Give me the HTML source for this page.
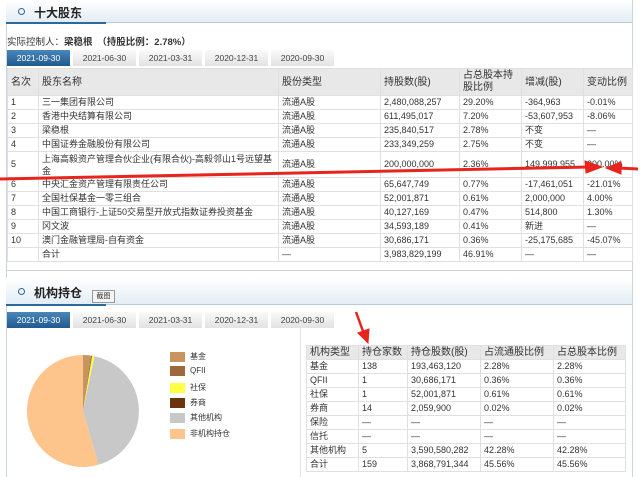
<!DOCTYPE html>
<html><head><meta charset="utf-8"><style>
*{margin:0;padding:0;box-sizing:border-box}
body{width:640px;height:477px;background:#fff;position:relative;overflow:hidden;font-family:"Liberation Sans","Noto Sans CJK SC",sans-serif;font-size:9px;color:#333}
.abs{position:absolute}
.hdr{left:6px;width:626px;height:23px;background:linear-gradient(#fff,#e3edf5);border-bottom:1px solid #b9cad8}
.hdr .ul{position:absolute;left:0;bottom:-2px;width:100px;height:2px;background:#2b6a9b}
.hdr .t{position:absolute;left:28px;top:4px;font-size:12px;font-weight:bold;color:#222}
.hdr .c{position:absolute;left:12px;top:8px;width:7px;height:7px;border:1.5px solid #2b6a9b;border-radius:50%}
.tabs{left:7px;height:16px;display:flex;gap:3px}
.tabs div{width:63px;height:16px;background:linear-gradient(#fafafa,#e2e2e2);text-align:center;line-height:16px;font-size:8.5px;color:#444}
.tabs div.on{background:linear-gradient(#4a86b8,#1e5a8e);color:#fff}
table{border-collapse:collapse;table-layout:fixed}
td{border:1px solid #e0e0e0;padding:0 3px;white-space:nowrap;overflow:hidden;height:14px;line-height:13px;font-size:9px}
tr.h td{background:#e8e8e8;color:#333;font-size:10px}
.lg{left:170px;font-size:8px;color:#333}
.lg span{display:inline-block;width:15px;height:10px;vertical-align:middle;margin-right:5px}
</style></head><body>
<div class="abs" style="left:6px;top:0;width:1px;height:477px;background:#c9d6e0"></div>
<div class="abs" style="left:632px;top:0;width:1px;height:477px;background:#c9d6e0"></div>
<div class="abs hdr" style="top:0"><div class="c"></div><div class="t">十大股东</div><div class="ul"></div></div>
<div class="abs" style="left:7px;top:34px;font-size:9.5px">实际控制人：<b>梁稳根</b>　<b>（持股比例：2.78%）</b></div>
<div class="abs tabs" style="top:50px"><div class="on">2021-09-30</div><div>2021-06-30</div><div>2021-03-31</div><div>2020-12-31</div><div>2020-09-30</div></div>
<table class="abs" style="left:7px;top:68px;width:625px">
<colgroup><col style="width:31px"><col style="width:240px"><col style="width:102px"><col style="width:79px"><col style="width:62px"><col style="width:62px"><col style="width:49px"></colgroup>
<tr class="h"><td style="height:27px">名次</td><td>股东名称</td><td>股份类型</td><td>持股数(股)</td><td style="white-space:normal;line-height:12px">占总股本持股比例</td><td>增减(股)</td><td>变动比例</td></tr>
<tr><td>1</td><td>三一集团有限公司</td><td>流通A股</td><td>2,480,088,257</td><td>29.20%</td><td>-364,963</td><td>-0.01%</td></tr>
<tr><td>2</td><td>香港中央结算有限公司</td><td>流通A股</td><td>611,495,017</td><td>7.20%</td><td>-53,607,953</td><td>-8.06%</td></tr>
<tr><td>3</td><td>梁稳根</td><td>流通A股</td><td>235,840,517</td><td>2.78%</td><td>不变</td><td>—</td></tr>
<tr><td>4</td><td>中国证券金融股份有限公司</td><td>流通A股</td><td>233,349,259</td><td>2.75%</td><td>不变</td><td>—</td></tr>
<tr><td style="height:26px">5</td><td style="white-space:normal;line-height:12px">上海高毅资产管理合伙企业(有限合伙)-高毅邻山1号远望基金</td><td>流通A股</td><td>200,000,000</td><td>2.36%</td><td>149,999,955</td><td>300.00%</td></tr>
<tr><td>6</td><td>中央汇金资产管理有限责任公司</td><td>流通A股</td><td>65,647,749</td><td>0.77%</td><td>-17,461,051</td><td>-21.01%</td></tr>
<tr><td>7</td><td>全国社保基金一零三组合</td><td>流通A股</td><td>52,001,871</td><td>0.61%</td><td>2,000,000</td><td>4.00%</td></tr>
<tr><td>8</td><td>中国工商银行-上证50交易型开放式指数证券投资基金</td><td>流通A股</td><td>40,127,169</td><td>0.47%</td><td>514,800</td><td>1.30%</td></tr>
<tr><td>9</td><td>冈文波</td><td>流通A股</td><td>34,593,189</td><td>0.41%</td><td>新进</td><td>—</td></tr>
<tr><td>10</td><td>澳门金融管理局-自有资金</td><td>流通A股</td><td>30,686,171</td><td>0.36%</td><td>-25,175,685</td><td>-45.07%</td></tr>
<tr><td></td><td>合计</td><td>—</td><td>3,983,829,199</td><td>46.91%</td><td>—</td><td>—</td></tr>
</table>
<div class="abs" style="left:6px;top:270px;width:627px;height:1px;background:#c9d6e0"></div>
<div class="abs hdr" style="top:278px;height:27px"><div class="c" style="top:10px"></div><div class="t" style="top:6px">机构持仓</div><div class="ul"></div></div>
<div class="abs" style="left:92px;top:290px;width:23px;height:13px;border:1px solid #999;background:#f4f4f4;font-size:7px;text-align:center;line-height:11px">截图</div>
<div class="abs tabs" style="top:312px"><div class="on">2021-09-30</div><div>2021-06-30</div><div>2021-03-31</div><div>2020-12-31</div><div>2020-09-30</div></div>
<div class="abs" style="left:300px;top:328px;width:332px;height:149px;border-left:1px solid #e4e4e4"></div>
<svg class="abs" style="left:0;top:0" width="640" height="477">
<path d="M83,411 L83,355 A56,56 0 0 1 91,355.6 Z" fill="#c8955f"/>
<path d="M83,411 L91,355.6 A56,56 0 0 1 92.2,355.8 Z" fill="#9c6a3a"/>
<path d="M83,411 L92.2,355.8 A56,56 0 0 1 94.4,356.2 Z" fill="#ffff44"/>
<path d="M83,411 L94.4,356.2 A56,56 0 0 1 98.5,464.8 Z" fill="#c8c8c8"/>
<path d="M83,411 L98.5,464.8 A56,56 0 1 1 83,355 Z" fill="#fdc58c"/>
<g stroke="#e8241c" fill="#e8241c">
<path d="M0,179 L590,167" stroke-width="3"/><path d="M585,161 L602,167 L586,173 Z"/>
<path d="M638,169 L618,168" stroke-width="3"/><path d="M621,162 L606,168 L621,174 Z"/>
<path d="M356,312 L364,334" stroke-width="2.5"/><path d="M358,333 L368,343 L369,329 Z"/>
</g></svg>
<div class="abs lg" style="top:351px"><span style="background:#c8955f"></span>基金</div>
<div class="abs lg" style="top:366px"><span style="background:#9c6a3a"></span>QFII</div>
<div class="abs lg" style="top:382px"><span style="background:#ffff44"></span>社保</div>
<div class="abs lg" style="top:397px"><span style="background:#6b3410"></span>券商</div>
<div class="abs lg" style="top:412px"><span style="background:#c8c8c8"></span>其他机构</div>
<div class="abs lg" style="top:428px"><span style="background:#fdc58c"></span>非机构持仓</div>
<table class="abs" style="left:306px;top:345px;width:319px">
<colgroup><col style="width:52px"><col style="width:49px"><col style="width:73px"><col style="width:73px"><col style="width:72px"></colgroup>
<tr class="h"><td>机构类型</td><td>持仓家数</td><td>持仓股数(股)</td><td>占流通股比例</td><td>占总股本比例</td></tr>
<tr><td>基金</td><td>138</td><td>193,463,120</td><td>2.28%</td><td>2.28%</td></tr>
<tr><td>QFII</td><td>1</td><td>30,686,171</td><td>0.36%</td><td>0.36%</td></tr>
<tr><td>社保</td><td>1</td><td>52,001,871</td><td>0.61%</td><td>0.61%</td></tr>
<tr><td>券商</td><td>14</td><td>2,059,900</td><td>0.02%</td><td>0.02%</td></tr>
<tr><td>保险</td><td>—</td><td>—</td><td>—</td><td>—</td></tr>
<tr><td>信托</td><td>—</td><td>—</td><td>—</td><td>—</td></tr>
<tr><td>其他机构</td><td>5</td><td>3,590,580,282</td><td>42.28%</td><td>42.28%</td></tr>
<tr><td>合计</td><td>159</td><td>3,868,791,344</td><td>45.56%</td><td>45.56%</td></tr>
</table>
</body></html>
